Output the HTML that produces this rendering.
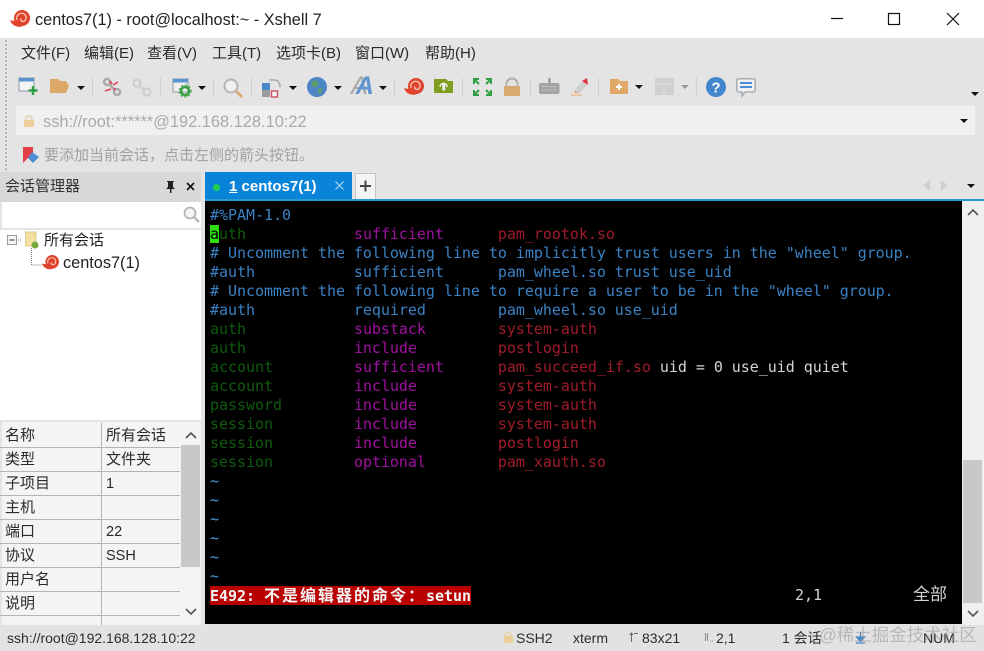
<!DOCTYPE html>
<html><head><meta charset="utf-8"><style>
html,body{margin:0;padding:0;background:#e4e4e4}
#p{position:relative;width:984px;height:651px;overflow:hidden;background:#e4e4e4;font-family:"Liberation Sans","Noto Sans CJK SC",sans-serif;color:#222}
.a{position:absolute;white-space:nowrap}
.m{font-size:15px;top:45px;line-height:18px;color:#2a2a2a}
pre{margin:0;position:absolute;left:210px;top:206px;font:15px/19px "DejaVu Sans Mono","Noto Sans CJK SC",monospace;letter-spacing:-.035px;color:#3b82c4}
.g{color:#0e5c0e}.u{color:#a010a0}.r{color:#a01c2a}.w{color:#d4d4d4}.t{color:#4a9cd8}
.c{position:absolute;font-size:15px;line-height:22px;color:#2a2a2a;white-space:nowrap}
.n{font-size:14.500px}
.l{position:absolute;background:#b4b4b4}
.s{position:absolute;font-size:14px;top:630px;line-height:17px;color:#2c2c2c;white-space:nowrap}
.ar{position:absolute;width:0;height:0;border-left:4px solid transparent;border-right:4px solid transparent;border-top:4px solid #111}
.sep{position:absolute;top:78px;width:1px;height:19px;background:#cfcfcf}
svg{position:absolute;overflow:visible}
</style></head><body><div id="p">
<svg width="0" height="0"><defs><g id="sn"><circle cx="12" cy="8" r="8" fill="#e0432c"/><path d="M0 10C3 11 6 11 8 10L13 16C8 18 2 16 0 10Z" fill="#e0432c"/><path d="M7 10C5.500 5 10 2.500 13 3.500C16.500 4.500 17 9 14.500 11C12.500 12.500 10 10.500 11 8.500" fill="none" stroke="#f8c8b8" stroke-width="1.300"/></g></defs></svg>

<!-- title bar -->
<div class="a" style="left:0;top:0;width:984px;height:38px;background:#fff"></div>
<svg style="left:10px;top:10px" width="20" height="18"><use href="#sn"/></svg>
<div class="a" style="left:35px;top:10px;font-size:16.300px;line-height:20px;color:#222">centos7(1) - root@localhost:~ - Xshell 7</div>
<svg style="left:830px;top:12px" width="145" height="15" fill="none" stroke="#111" stroke-width="1.200"><path d="M1 6.500H13"/><rect x="58.500" y="1.500" width="11" height="11"/><path d="M117 1L129 13M129 1L117 13"/></svg>

<!-- menu -->
<div class="a m" style="left:21px">文件(F)</div>
<div class="a m" style="left:84px">编辑(E)</div>
<div class="a m" style="left:147px">查看(V)</div>
<div class="a m" style="left:212px">工具(T)</div>
<div class="a m" style="left:276px">选项卡(B)</div>
<div class="a m" style="left:355px">窗口(W)</div>
<div class="a m" style="left:425px">帮助(H)</div>

<!-- grip -->
<div class="a" style="left:5px;top:40px;width:2px;height:130px;border-left:2px dotted #b8b8b8"></div>

<!-- toolbar icons -->
<svg style="left:18px;top:77px" width="22" height="20"><rect x="1" y="1" width="15" height="13" fill="#f4f4f4" stroke="#8a98a8"/><rect x="1" y="1" width="15" height="3.500" fill="#5a94d0"/><path d="M15 9V18M10.500 13.500H19.500" stroke="#2ea043" stroke-width="2.400"/></svg>
<svg style="left:50px;top:78px" width="20" height="17"><path d="M0 1H8L10 3H16L19 8L16 15H0Z" fill="#dca868"/></svg>
<div class="ar" style="left:77px;top:86px"></div>
<div class="sep" style="left:92px"></div>
<svg style="left:102px;top:77px" width="20" height="20" fill="none" stroke="#aaa" stroke-width="2.400"><circle cx="5" cy="5" r="3"/><circle cx="15" cy="15" r="3"/><path d="M7 7L13 13"/><path d="M9 12L3 14M11 8L16 5M8 4L10 7M12 13L13 11" stroke="#e04050" stroke-width="1.600"/></svg>
<svg style="left:132px;top:78px" width="20" height="20" fill="none" stroke="#cfcfcf" stroke-width="2.400"><circle cx="5" cy="5" r="3.500"/><circle cx="15" cy="14" r="3.500"/><path d="M7 8L13 12"/></svg>
<div class="sep" style="left:160px"></div>
<svg style="left:172px;top:78px" width="22" height="20"><rect x="1" y="1" width="15" height="13" fill="#f0f0f0" stroke="#8a98a8"/><rect x="1" y="1" width="15" height="3.500" fill="#5a94d0"/><circle cx="13" cy="13" r="4" fill="none" stroke="#3aa040" stroke-width="2.600"/><circle cx="13" cy="13" r="6" fill="none" stroke="#3aa040" stroke-width="1.200" stroke-dasharray="2 2"/></svg>
<div class="ar" style="left:198px;top:86px"></div>
<div class="sep" style="left:213px"></div>
<svg style="left:222px;top:77px" width="22" height="21" fill="none"><circle cx="9" cy="9" r="6.500" stroke="#b4b4b4" stroke-width="2" fill="#f0f0f0"/><path d="M14 14L20 20" stroke="#d8aa78" stroke-width="3"/></svg>
<div class="sep" style="left:251px"></div>
<svg style="left:261px;top:78px" width="22" height="20"><rect x="1" y="5" width="8" height="7" fill="#4a88c8"/><rect x="1" y="12" width="8" height="7" fill="#9a9a9a"/><rect x="10.500" y="13" width="6" height="6" fill="#f4f4f4" stroke="#d05060" stroke-width="1.400"/><path d="M8 2H14Q19 3 19 9" fill="none" stroke="#aaa" stroke-width="1.500"/></svg>
<div class="ar" style="left:289px;top:86px"></div>
<svg style="left:307px;top:77px" width="20" height="20"><circle cx="10" cy="10" r="10" fill="#4d86c4"/><path d="M4 5L9 3L12 7L8 11L5 9ZM11 12L15 11L14 17L11 16Z" fill="#5f9e6a"/></svg>
<div class="ar" style="left:334px;top:86px"></div>
<div class="a" style="left:351px;top:73px;font:italic 25px/26px 'Liberation Sans';color:#a8a8a8;letter-spacing:-12px">A<span style="color:#5f94d0;font-weight:bold">A</span></div>
<div class="ar" style="left:379px;top:86px"></div>
<div class="sep" style="left:394px"></div>
<svg style="left:404px;top:78px" width="20" height="18"><use href="#sn"/></svg>
<svg style="left:434px;top:78px" width="20" height="17"><path d="M0 1H12L14 3H19V15H0Z" fill="#7f9e20"/><path d="M6 9A3.500 3.500 0 0 1 9 5.500V12.500M10.500 12.500V5.500A3.500 3.500 0 0 1 13 9" fill="none" stroke="#f4f4f4" stroke-width="1.400"/></svg>
<div class="sep" style="left:462px"></div>
<svg style="left:473px;top:78px" width="19" height="18" fill="none" stroke="#2ea043" stroke-width="2"><path d="M1 6V1H6M1 1L6 6M13 1H18V6M18 1L13 6M1 12V17H6M1 17L6 12M13 17H18V12M18 17L13 12"/></svg>
<svg style="left:503px;top:78px" width="18" height="19"><path d="M3.500 9V6A5.500 5.500 0 0 1 14.500 6V9" fill="none" stroke="#b0b0b0" stroke-width="2"/><rect x="1" y="8" width="16" height="10" rx="1" fill="#d8aa70"/></svg>
<div class="sep" style="left:530px"></div>
<svg style="left:539px;top:78px" width="21" height="17"><path d="M10.500 0V5" stroke="#8a8a8a" stroke-width="2"/><rect x="0" y="5" width="20.500" height="11" rx="2" fill="#a4a4a4"/><path d="M3 8.500H18M3 12H18" stroke="#d8d8d8" stroke-dasharray="1.500 1.500"/></svg>
<svg style="left:570px;top:77px" width="22" height="20"><path d="M4 14L12 4L17 8L10 16Z" fill="#d0d0d0"/><path d="M12 4L17 1L18 8Z" fill="#e03040"/><path d="M1 18H12" stroke="#f0b890" stroke-width="1.500"/><path d="M4 14L10 16L5 16Z" fill="#e8a070"/></svg>
<div class="sep" style="left:598px"></div>
<svg style="left:610px;top:78px" width="19" height="17"><path d="M0 1H8L10 3H18V16H0Z" fill="#e2a868"/><path d="M9 6V12M6 9H12" stroke="#fff" stroke-width="2"/></svg>
<div class="ar" style="left:635px;top:85px"></div>
<svg style="left:655px;top:78px" width="19" height="17"><rect width="19" height="17" fill="#d0d0d0"/><path d="M0 6H19M9 6V17" stroke="#dcdcdc"/></svg>
<div class="ar" style="left:681px;top:85px;border-top-color:#999"></div>
<div class="sep" style="left:696px"></div>
<svg style="left:706px;top:77px" width="20" height="20"><circle cx="10" cy="10" r="10" fill="#4486cc"/><text x="10" y="15.500" text-anchor="middle" font-family="Liberation Sans" font-weight="bold" font-size="15" fill="#fff">?</text></svg>
<svg style="left:736px;top:78px" width="20" height="20"><path d="M3 0.800H17Q19.200 0.800 19.200 3V11Q19.200 14 17 14H9L6 18V14H3Q0.800 14 0.800 11V3Q0.800 0.800 3 0.800Z" fill="#f0f0f0" stroke="#a8b0b8" stroke-width="1.500"/><path d="M4 5H16M4 9H16" stroke="#4a90d8" stroke-width="2"/></svg>
<div class="ar" style="left:971px;top:92px"></div>

<!-- address bar -->
<div class="a" style="left:16px;top:106px;width:959px;height:29px;background:#f0f0f0"></div>
<svg style="left:23px;top:115px" width="12" height="12"><path d="M3 6V4A3 3 0 0 1 9 4V6" fill="none" stroke="#e0d0a8" stroke-width="1.500"/><rect x="1" y="5" width="10" height="7" rx="1" fill="#eccf98"/></svg>
<div class="a" style="left:43px;top:113px;font-size:16.400px;line-height:18px;color:#aaa">ssh://root:******@192.168.128.10:22</div>
<div class="ar" style="left:960px;top:119px"></div>

<!-- hint -->
<svg style="left:22px;top:147px" width="18" height="17"><path d="M1 0H11V8L6 11L1 16Z" fill="#e04048"/><path d="M10 5L17 10L11 16L6 11Z" fill="#4c8cd0"/></svg>
<div class="a" style="left:44px;top:146px;font-size:15px;line-height:20px;color:#a2a2a2">要添加当前会话，点击左侧的箭头按钮。</div>

<!-- left panel -->
<div class="a" style="left:0;top:172px;width:201px;height:30px;background:#d8d8d8"></div>
<div class="a" style="left:5px;top:177px;font-size:15px;line-height:20px;color:#333">会话管理器</div>
<svg style="left:164px;top:180px" width="30" height="14"><path d="M3 1H10V2H9V7L11 9H7.500V13H6V9H2L4 7V2H3Z" fill="#222"/><path d="M23 3L30 10M30 3L23 10" stroke="#111" stroke-width="1.600"/></svg>
<div class="a" style="left:2px;top:202px;width:199px;height:26px;background:#fff"></div>
<svg style="left:183px;top:206px" width="18" height="18" fill="none"><circle cx="7" cy="7" r="5.500" stroke="#b4b4b4" stroke-width="1.800" fill="#f4f4f4"/><path d="M11 11L16 16" stroke="#b8b8b8" stroke-width="2.400"/></svg>
<div class="a" style="left:0;top:230px;width:201px;height:190px;background:#fff"></div>
<svg style="left:7px;top:232px" width="50" height="40" fill="none"><rect x="0.500" y="3.500" width="9" height="9" fill="#f4f4f4" stroke="#999"/><path d="M2.500 8H7.500" stroke="#333"/><path d="M11 8H14M24.500 16V33H35" stroke="#777" stroke-dasharray="1 1"/><path d="M18.500 0H29V14H18.500Z" fill="#f4e0a0" stroke="#dcc890"/><circle cx="28" cy="13" r="3.500" fill="#76a83c"/></svg>
<div class="a" style="left:44px;top:231px;font-size:15px;line-height:20px;color:#222">所有会话</div>
<svg style="left:42px;top:255px" width="17" height="15"><g transform="scale(.85)"><use href="#sn"/></g></svg>
<div class="a" style="left:63px;top:253px;font-size:16.300px;line-height:20px;color:#222">centos7(1)</div>

<!-- properties -->
<div class="a" style="left:2px;top:422px;width:199px;height:203px;background:#f4f4f4"></div>
<div class="l" style="left:101px;top:423px;width:1px;height:202px"></div>
<div class="l" style="left:0;top:447px;width:180px;height:1px"></div>
<div class="l" style="left:0;top:471px;width:180px;height:1px"></div>
<div class="l" style="left:0;top:495px;width:180px;height:1px"></div>
<div class="l" style="left:0;top:519px;width:180px;height:1px"></div>
<div class="l" style="left:0;top:543px;width:180px;height:1px"></div>
<div class="l" style="left:0;top:567px;width:180px;height:1px"></div>
<div class="l" style="left:0;top:591px;width:180px;height:1px"></div>
<div class="l" style="left:0;top:615px;width:180px;height:1px"></div>
<div class="c" style="left:5px;top:425px">名称</div><div class="c" style="left:106px;top:425px">所有会话</div>
<div class="c" style="left:5px;top:449px">类型</div><div class="c" style="left:106px;top:449px">文件夹</div>
<div class="c" style="left:5px;top:473px">子项目</div><div class="c n" style="left:106px;top:473px">1</div>
<div class="c" style="left:5px;top:497px">主机</div>
<div class="c" style="left:5px;top:521px">端口</div><div class="c n" style="left:106px;top:521px">22</div>
<div class="c" style="left:5px;top:545px">协议</div><div class="c n" style="left:106px;top:545px">SSH</div>
<div class="c" style="left:5px;top:569px">用户名</div>
<div class="c" style="left:5px;top:593px">说明</div>
<div class="a" style="left:181px;top:445px;width:19px;height:122px;background:#c8c8c8"></div>
<svg style="left:185px;top:430px" width="12" height="190" fill="none" stroke="#555" stroke-width="1.600"><path d="M1 8L6 3L11 8M1 179L6 184L11 179"/></svg>

<!-- tabs -->
<div class="a" style="left:205px;top:172px;width:147px;height:28px;background:#0a84d8"></div>
<div class="a" style="left:213px;top:184px;width:7px;height:7px;border-radius:50%;background:#1fd050"></div>
<div class="a" style="left:229px;top:178px;font-size:15px;font-weight:bold;line-height:18px;color:#fff"><span style="text-decoration:underline">1</span> centos7(1)</div>
<svg style="left:335px;top:181px" width="9" height="9"><path d="M.5 .5L8.500 8.500M8.500 .5L.5 8.500" stroke="#bcdcf4" stroke-width="1"/></svg>
<div class="a" style="left:355px;top:173px;width:19px;height:26px;background:#f4f4f4;border:1px solid #c4c4c4;border-bottom:0"></div>
<svg style="left:358px;top:179px" width="15" height="15"><path d="M7.500 1.500V12.500M2 7H13" stroke="#444" stroke-width="2"/></svg>
<svg style="left:923px;top:180px" width="50" height="13"><path d="M7 0V11L0 5.500Z" fill="#cfcfcf"/><path d="M18 0V11L25 5.500Z" fill="#cfcfcf"/></svg>
<div class="ar" style="left:967px;top:184px"></div>
<div class="a" style="left:205px;top:199px;width:779px;height:2px;background:#2a9ad0"></div>

<!-- terminal -->
<div class="a" style="left:205px;top:201px;width:757px;height:423px;background:#000"></div>
<div class="a" style="left:210px;top:225px;width:9px;height:18px;background:#2ee010"></div>
<pre>#%PAM-1.0
<span style="color:#000">a</span><span class="g">uth</span>            <span class="u">sufficient</span>      <span class="r">pam_rootok.so</span>
# Uncomment the following line to implicitly trust users in the "wheel" group.
#auth           sufficient      pam_wheel.so trust use_uid
# Uncomment the following line to require a user to be in the "wheel" group.
#auth           required        pam_wheel.so use_uid
<span class="g">auth</span>            <span class="u">substack</span>        <span class="r">system-auth</span>
<span class="g">auth</span>            <span class="u">include</span>         <span class="r">postlogin</span>
<span class="g">account</span>         <span class="u">sufficient</span>      <span class="r">pam_succeed_if.so</span> <span class="w">uid = 0 use_uid quiet</span>
<span class="g">account</span>         <span class="u">include</span>         <span class="r">system-auth</span>
<span class="g">password</span>        <span class="u">include</span>         <span class="r">system-auth</span>
<span class="g">session</span>         <span class="u">include</span>         <span class="r">system-auth</span>
<span class="g">session</span>         <span class="u">include</span>         <span class="r">postlogin</span>
<span class="g">session</span>         <span class="u">optional</span>        <span class="r">pam_xauth.so</span>
<span class="t">~</span>
<span class="t">~</span>
<span class="t">~</span>
<span class="t">~</span>
<span class="t">~</span>
<span class="t">~</span></pre>
<div class="a" style="left:210px;top:586px;width:261px;height:19px;background:#b80000"></div>
<div class="a" style="left:210px;top:586px;font:bold 15px/19px 'DejaVu Sans Mono','Noto Sans CJK SC',monospace;color:#f4f4f4;letter-spacing:-.035px">E492: <span style="font-size:16px;letter-spacing:2px">不是编辑器的命令：</span>setun</div>
<div class="a" style="left:795px;top:585px;font:15px/20px 'DejaVu Sans Mono',monospace;color:#d4d4d4">2,1</div>
<div class="a" style="left:913px;top:585px;font-size:17px;line-height:20px;color:#d4d4d4">全部</div>

<!-- right scrollbar -->
<div class="a" style="left:962px;top:201px;width:22px;height:424px;background:#f0f0f0"></div>
<div class="a" style="left:963px;top:460px;width:19px;height:143px;background:#c8c8c8"></div>
<svg style="left:967px;top:207px" width="12" height="412" fill="none" stroke="#555" stroke-width="1.600"><path d="M1 8L6 3L11 8M1 404L6 409L11 404"/></svg>

<!-- status bar -->
<div class="a" style="left:0;top:625px;width:984px;height:26px;background:#e2e2e2"></div>
<div class="s" style="left:7px">ssh://root@192.168.128.10:22</div>
<svg style="left:503px;top:632px" width="11" height="12"><path d="M2.500 5V3.500A3 3 0 0 1 8.500 3.500V5" fill="none" stroke="#eccf98" stroke-width="1.200"/><rect x="1" y="4" width="9" height="7" rx="1" fill="#eccf98"/></svg>
<div class="s" style="left:516px">SSH2</div>
<div class="s" style="left:573px">xterm</div>
<svg style="left:629px;top:632px" width="10" height="11" fill="none" stroke="#666"><path d="M2.500 1V10M.5 3L2.500 1L4 3M5 1.500H9"/></svg>
<div class="s" style="left:642px">83x21</div>
<svg style="left:704px;top:632px" width="10" height="10" fill="none" stroke="#888"><path d="M1.500 1V9M3.500 1V9M6 9H7M8 9H9"/></svg>
<div class="s" style="left:716px">2,1</div>
<div class="s" style="left:782px">1 会话</div>
<svg style="left:855px;top:632px" width="11" height="12"><path d="M5.500 0V6M1.500 5H9.500L5.500 9.500ZM1 11H10" fill="#4a88c8" stroke="#4a88c8" stroke-width="1.200"/></svg>
<div class="s" style="left:923px">NUM</div>
<div class="a" style="left:819px;top:625px;font-size:17.500px;line-height:20px;color:rgba(150,150,150,.55)">@稀土掘金技术社区</div>
</div></body></html>
